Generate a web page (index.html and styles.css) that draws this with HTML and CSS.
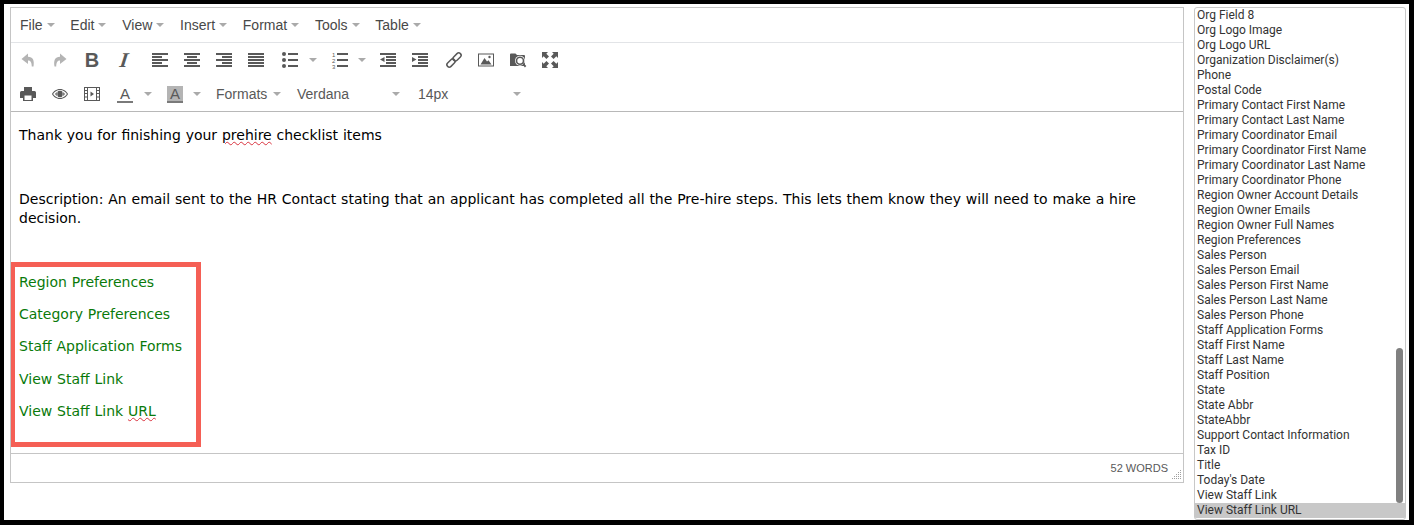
FILE: index.html
```html
<!DOCTYPE html>
<html lang="en">
<head>
  <meta charset="UTF-8">
  <title>Email template editor</title>
  <link rel="stylesheet" href="styles.css">
</head>
<body>
  <div class="frame">
    <div class="editor">
      <div class="menubar">
        <span class="menu-item">File<i class="caret"></i></span>
        <span class="menu-item">Edit<i class="caret"></i></span>
        <span class="menu-item">View<i class="caret"></i></span>
        <span class="menu-item">Insert<i class="caret"></i></span>
        <span class="menu-item">Format<i class="caret"></i></span>
        <span class="menu-item">Tools<i class="caret"></i></span>
        <span class="menu-item">Table<i class="caret"></i></span>
      </div>

      <div class="toolbar">
        <div class="tool-row">
          <span class="btn disabled"><svg viewBox="0 0 16 16"><path d="M8 1.5 1.5 7 8 12V8.6c2.6 0 3.6 1.7 3.8 5.9h1.7C14.6 8.5 13 4.800 8 4.800z"/></svg></span>
          <span class="btn disabled"><svg viewBox="0 0 16 16"><path d="M8 1.500 14.500 7 8 12V8.600c-2.600 0-3.600 1.700-3.800 5.900H2.500C1.400 8.500 3 4.800 8 4.800z"/></svg></span>
          <span class="btn glyph-b">B</span>
          <span class="btn glyph-i">I</span>

          <span class="btn first-in-group"><svg viewBox="0 0 16 16"><path d="M0 1h16v2H0zM0 4h10v2H0zM0 7h16v2H0zM0 10h10v2H0zM0 13h16v2H0z"/></svg></span>
          <span class="btn"><svg viewBox="0 0 16 16"><path d="M0 1h16v2H0zM3 4h10v2H3zM0 7h16v2H0zM3 10h10v2H3zM0 13h16v2H0z"/></svg></span>
          <span class="btn"><svg viewBox="0 0 16 16"><path d="M0 1h16v2H0zM6 4h10v2H6zM0 7h16v2H0zM6 10h10v2H6zM0 13h16v2H0z"/></svg></span>
          <span class="btn"><svg viewBox="0 0 16 16"><path d="M0 1h16v2H0zM0 4h16v2H0zM0 7h16v2H0zM0 10h16v2H0zM0 13h16v2H0z"/></svg></span>

          <span class="btn list-start"><svg viewBox="0 0 16 16"><circle cx="2" cy="2" r="2"/><circle cx="2" cy="8" r="2"/><circle cx="2" cy="14" r="2"/><path d="M6 1h10v2H6zM6 7h10v2H6zM6 13h10v2H6z"/></svg></span>
          <span class="split-caret bullet-caret"><i class="caret"></i></span>
          <span class="btn"><svg viewBox="0 0 16 16"><text x="0" y="5" class="num">1</text><text x="0" y="11" class="num">2</text><text x="0" y="16.500" class="num">3</text><path d="M5 1h11v2H5zM5 7h11v2H5zM5 13h11v2H5z"/></svg></span>
          <span class="split-caret"><i class="caret"></i></span>

          <span class="btn"><svg viewBox="0 0 16 16"><path d="M0 1h16v2H0zM6 4h10v2H6zM6 7h10v2H6zM6 10h10v2H6zM0 13h16v2H0zM4.500 5v5L0 7.500z"/></svg></span>
          <span class="btn"><svg viewBox="0 0 16 16"><path d="M0 1h16v2H0zM6 4h10v2H6zM6 7h10v2H6zM6 10h10v2H6zM0 13h16v2H0zM0 5v5l4.500-2.500z"/></svg></span>

          <span class="btn link-start"><svg viewBox="0 0 16 16" class="outline"><rect x="-4.500" y="-2.400" width="9.500" height="4.800" rx="2.400" transform="translate(4.800 11.200) rotate(-45)"/><rect x="-5" y="-2.400" width="9.500" height="4.800" rx="2.400" transform="translate(11.200 4.800) rotate(-45)"/></svg></span>
          <span class="btn"><svg viewBox="0 0 16 16"><path fill-rule="evenodd" d="M0 1.500h16v13H0zM1 2.500v11h14v-11z"/><path d="M2.500 12.500 6.500 6l2.500 3.500 1.500-1.200 3 4.200z"/><circle cx="11.500" cy="5" r="1.200"/></svg></span>
          <span class="btn"><svg viewBox="0 0 16 16"><path d="M0 4V2.500A1 1 0 0 1 1 1.500h4.500L7 3h7a1 1 0 0 1 1 1v10H0z"/><circle cx="10" cy="8.700" r="5" fill="#fff"/><circle cx="10" cy="8.700" r="3.500" fill="#fff" stroke="#595959" stroke-width="1.600"/><path d="M12.300 12l1-1 3 3-1.400 1.400z"/></svg></span>
          <span class="btn"><svg viewBox="0 0 16 16"><path d="M0 0h6L4.300 1.700 7 4.400 4.400 7 1.700 4.300 0 6zM16 0v6l-1.700-1.700L11.600 7 9 4.400l2.700-2.700L10 0zM0 16v-6l1.700 1.700L4.400 9 7 11.600l-2.700 2.700L6 16zM16 16h-6l1.700-1.700L9 11.600 11.600 9l2.700 2.700L16 10z"/></svg></span>
        </div>

        <div class="tool-row">
          <span class="btn"><svg viewBox="0 0 16 16"><path fill-rule="evenodd" d="M4 1h8v4H4zM1.500 5h13A1.500 1.500 0 0 1 16 6.500V12h-3v3H3v-3H0V6.500A1.500 1.500 0 0 1 1.500 5zM4.500 9.500V14h7V9.500z"/></svg></span>
          <span class="btn"><svg viewBox="0 0 16 16"><path fill-rule="evenodd" d="M8 3c3.800 0 6.800 2.500 8 5-1.200 2.500-4.200 5-8 5s-6.800-2.500-8-5c1.200-2.500 4.200-5 8-5zM8 4C5 4 2.400 5.800 1.100 8 2.400 10.200 5 12 8 12s5.600-1.800 6.900-4C13.600 5.800 11 4 8 4z"/><path fill-rule="evenodd" d="M8 4.700a3.300 3.300 0 1 1 0 6.600 3.300 3.300 0 0 1 0-6.600zM3 8c1.200-1.500 2.600-2.200 3-2.500C5 6.500 5 9.500 6 10.500 4.800 10 3.800 9.200 3 8zm10 0c-.8 1.200-1.800 2-3 2.500 1-1 1-4 0-5 .4.300 1.800 1 3 2.500z"/></svg></span>
          <span class="btn"><svg viewBox="0 0 16 16"><path fill-rule="evenodd" d="M0 1h16v14H0zM1 2v2h2V2zM1 5v2h2V5zM1 8v2.500h2V8zM1 11.500V14h2v-2.500zM4 2v12h8V2zM13 2v2h2V2zM13 5v2h2V5zM13 8v2.500h2V8zM13 11.500V14h2v-2.500z"/><path d="M6.500 5.500v5L10 8z"/></svg></span>
          <span class="btn color-btn"><span class="color-a">A</span></span>
          <span class="color-caret"><i class="caret"></i></span>
          <span class="btn bg-btn"><span class="color-a shaded">A</span></span>
          <span class="color-caret"><i class="caret"></i></span>

          <span class="listbox formats">Formats<i class="caret"></i></span>
          <span class="listbox wide">Verdana<i class="caret"></i></span>
          <span class="listbox wide">14px<i class="caret"></i></span>
        </div>
      </div>

      <div class="content">
        <p>Thank you for finishing your <span class="misspelt">prehire</span> checklist items</p>
        <p class="blank">&nbsp;</p>
        <p>Description: An email sent to the HR Contact stating that an applicant has completed all the Pre-hire steps. This lets them know they will need to make a hire decision.</p>
        <p class="blank">&nbsp;</p>
        <p class="token">Region Preferences</p>
        <p class="token">Category Preferences</p>
        <p class="token">Staff Application Forms</p>
        <p class="token">View Staff Link</p>
        <p class="token">View Staff Link <span class="misspelt">URL</span></p>
        <div class="callout"></div>
      </div>

      <div class="statusbar">
        <span class="word-count">52 WORDS</span>
        <svg class="resize" viewBox="0 0 10 10"><path d="M8 0h1v1H8zM6 2h1v1H6zM8 2h1v1H8zM4 4h1v1H4zM6 4h1v1H6zM8 4h1v1H8zM2 6h1v1H2zM4 6h1v1H4zM6 6h1v1H6zM8 6h1v1H8zM0 8h1v1H0zM2 8h1v1H2zM4 8h1v1H4zM6 8h1v1H6zM8 8h1v1H8z"/></svg>
      </div>
    </div>

    <div class="field-list">
      <div class="field">Org Field 8</div>
      <div class="field">Org Logo Image</div>
      <div class="field">Org Logo URL</div>
      <div class="field">Organization Disclaimer(s)</div>
      <div class="field">Phone</div>
      <div class="field">Postal Code</div>
      <div class="field">Primary Contact First Name</div>
      <div class="field">Primary Contact Last Name</div>
      <div class="field">Primary Coordinator Email</div>
      <div class="field">Primary Coordinator First Name</div>
      <div class="field">Primary Coordinator Last Name</div>
      <div class="field">Primary Coordinator Phone</div>
      <div class="field">Region Owner Account Details</div>
      <div class="field">Region Owner Emails</div>
      <div class="field">Region Owner Full Names</div>
      <div class="field">Region Preferences</div>
      <div class="field">Sales Person</div>
      <div class="field">Sales Person Email</div>
      <div class="field">Sales Person First Name</div>
      <div class="field">Sales Person Last Name</div>
      <div class="field">Sales Person Phone</div>
      <div class="field">Staff Application Forms</div>
      <div class="field">Staff First Name</div>
      <div class="field">Staff Last Name</div>
      <div class="field">Staff Position</div>
      <div class="field">State</div>
      <div class="field">State Abbr</div>
      <div class="field">StateAbbr</div>
      <div class="field">Support Contact Information</div>
      <div class="field">Tax ID</div>
      <div class="field">Title</div>
      <div class="field">Today's Date</div>
      <div class="field">View Staff Link</div>
      <div class="field selected">View Staff Link URL</div>
      <div class="scroll-thumb"></div>
    </div>
  </div>
</body>
</html>
```

FILE: styles.css
```css
html, body {
  height: 100%;
}
body {
  margin: 0;
  padding: 4px 5px 5px 4px;
  box-sizing: border-box;
  background-color: #000;
  font-family: "Liberation Sans", Arial, sans-serif;
}
.frame {
  display: flex;
  align-items: flex-start;
  gap: 10px;
  height: 100%;
  padding: 3px 3px 0 6px;
  box-sizing: border-box;
  background-color: #fff;
}

/* editor */
.editor {
  width: 1174px;
  flex: none;
  box-sizing: border-box;
  border: 1px solid #c5c5c5;
}
.menubar {
  display: flex;
  align-items: center;
  gap: 15.75px;
  height: 34px;
  padding-left: 9px;
  border-bottom: 1px solid #e2e4e7;
  font-size: 14px;
  color: #484848;
}
.menu-item {
  display: flex;
  align-items: center;
}
.caret {
  display: block;
  width: 0;
  height: 0;
  margin-left: 4px;
  border-top: 4px solid #aaa;
  border-left: 4px solid transparent;
  border-right: 4px solid transparent;
}
.toolbar {
  height: 68px;
  border-bottom: 1px solid #b8b8b8;
}
.tool-row {
  display: flex;
  align-items: center;
  height: 34px;
  padding-left: 1px;
  color: #595959;
}
.btn {
  display: flex;
  align-items: center;
  justify-content: center;
  flex: none;
  width: 32px;
  height: 34px;
}
.btn svg {
  width: 16px;
  height: 16px;
  fill: #595959;
  overflow: visible;
}
.btn.disabled svg {
  fill: #b4b4b4;
}
.btn svg.outline {
  fill: none;
  stroke: #595959;
  stroke-width: 1.5;
}
.num {
  font-family: "Liberation Sans", Arial, sans-serif;
  font-size: 6px;
}
.glyph-b {
  font-size: 20px;
  font-weight: bold;
}
.glyph-i {
  font-family: "Liberation Serif", serif;
  font-size: 21px;
  font-style: italic;
  font-weight: bold;
  transform: skewX(-8deg);
}
.first-in-group {
  margin-left: 4px;
}
.list-start {
  margin-left: 2px;
}
.link-start {
  margin-left: 2px;
}
.split-caret {
  display: flex;
  flex: none;
  width: 16px;
}
.split-caret .caret {
  margin-left: 2px;
}
.bullet-caret {
  width: 18px;
}
.bullet-caret .caret {
  margin-left: 3px;
}
.color-a {
  display: block;
  box-sizing: border-box;
  width: 16px;
  height: 17px;
  border-bottom: 2px solid #7a7a7a;
  font-size: 15px;
  line-height: 15px;
  text-align: center;
}
.color-a.shaded {
  background-color: #b4b4b4;
}
.color-btn {
  margin-left: 1px;
}
.color-caret {
  display: flex;
  flex: none;
  width: 15px;
}
.color-caret .caret {
  margin-left: 3px;
}
.bg-btn {
  margin-left: 3px;
  margin-right: -1px;
}
.listbox {
  display: flex;
  align-items: center;
  justify-content: space-between;
  flex: none;
  font-size: 14px;
  color: #595959;
}
.formats {
  width: 65px;
  margin-left: 11px;
  margin-right: 16px;
}
.wide {
  width: 103px;
  margin-right: 18px;
}

/* content */
.content {
  position: relative;
  height: 341px;
  padding: 14px 8px 0;
  box-sizing: border-box;
  font-family: "DejaVu Sans", Verdana, sans-serif;
  font-size: 14px;
  line-height: 1.3;
  word-spacing: 0.37px;
  color: #000;
  overflow: hidden;
}
.content p {
  margin: 0 0 14px;
}
.token {
  color: #0a7a0a;
}
.misspelt {
  text-decoration: underline wavy #d9333f 1px;
  text-underline-offset: 1px;
}
.callout {
  position: absolute;
  left: -1px;
  top: 150px;
  width: 191px;
  height: 185px;
  box-sizing: border-box;
  border: 5px solid #f55f55;
}

.statusbar {
  display: flex;
  align-items: center;
  justify-content: flex-end;
  position: relative;
  height: 28px;
  padding-right: 15px;
  border-top: 1px solid #c5c5c5;
  font-size: 11px;
  color: #595959;
}
.resize {
  position: absolute;
  right: 1px;
  bottom: 2px;
  width: 10px;
  height: 10px;
  fill: #a0a0a0;
}

/* merge field list */
.field-list {
  position: relative;
  flex: none;
  width: 212px;
  height: 513px;
  box-sizing: border-box;
  border: 1px solid #c8c8c8;
  border-radius: 3px;
  overflow: hidden;
  font-family: Roboto, "Liberation Sans", sans-serif;
  font-size: 12px;
  line-height: 15px;
  color: #333;
}
.field {
  height: 15px;
  padding-left: 2px;
  white-space: nowrap;
}
.field.selected {
  background-color: #c8c8c8;
}
.scroll-thumb {
  position: absolute;
  top: 340px;
  right: 2px;
  width: 7px;
  height: 155px;
  border-radius: 4px;
  background-color: #808080;
}
```
